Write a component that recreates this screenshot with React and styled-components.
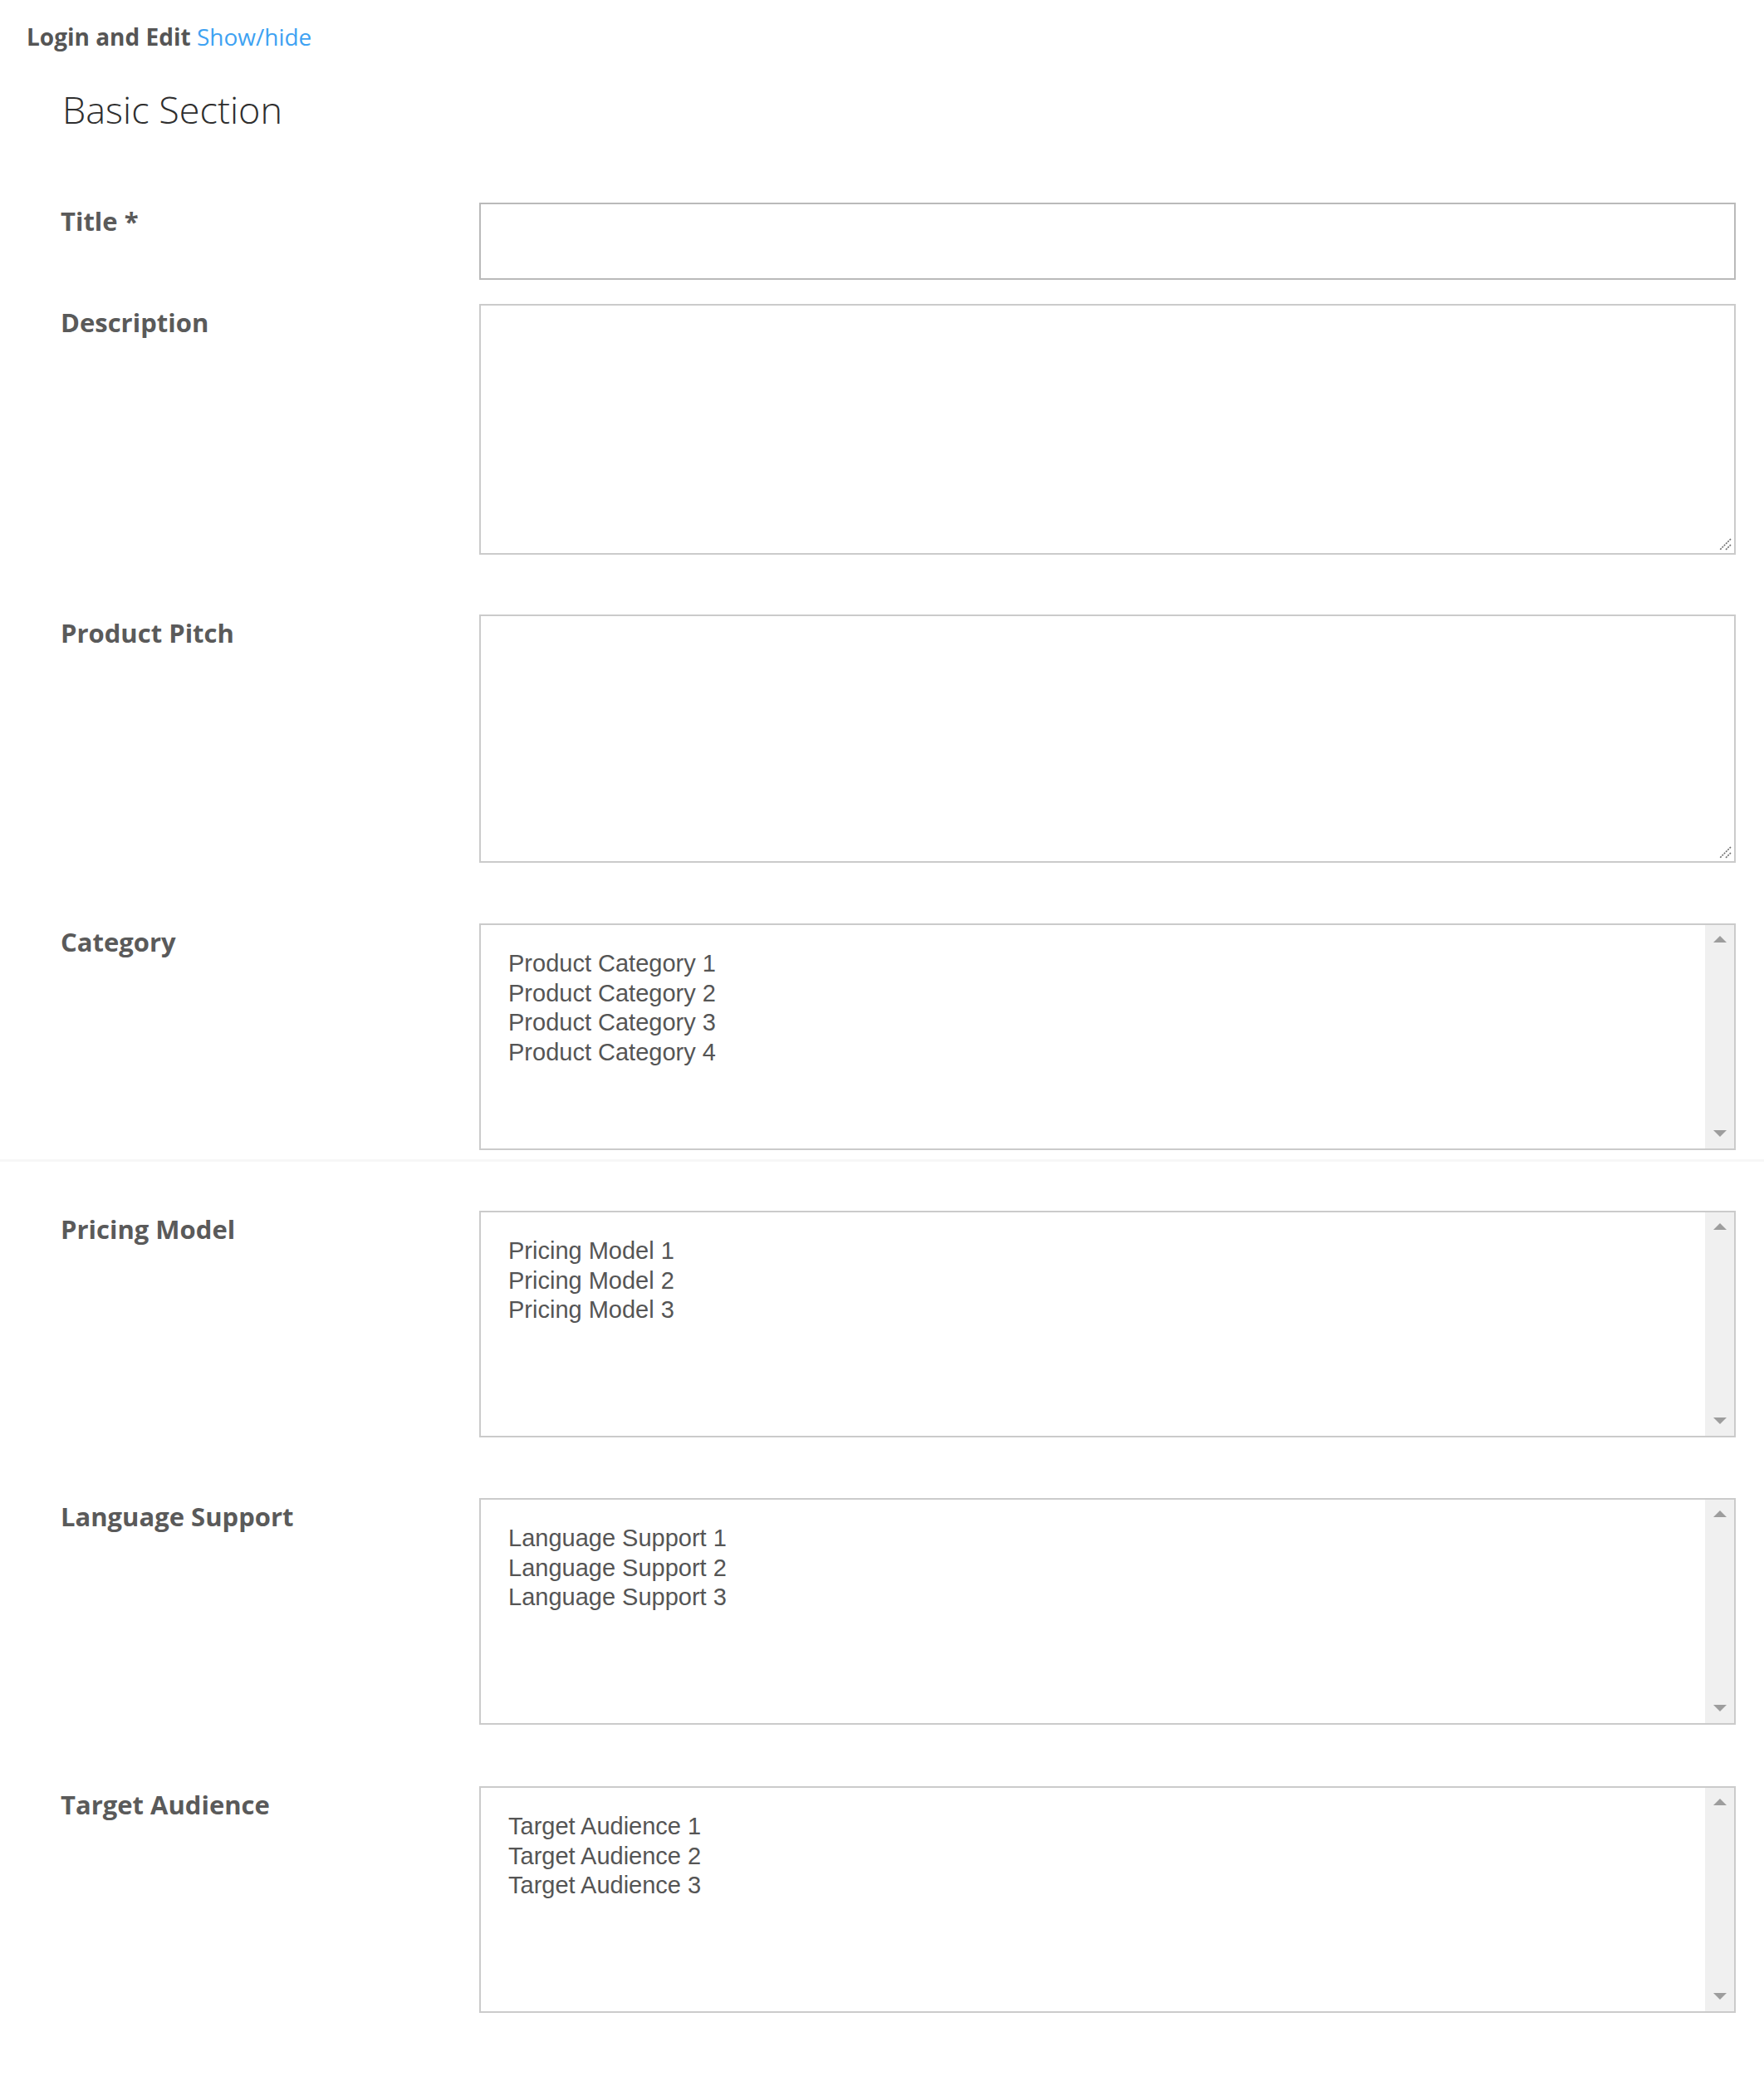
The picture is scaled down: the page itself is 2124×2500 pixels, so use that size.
import React from "react";
import styled, { createGlobalStyle } from "styled-components";

const GlobalStyle = createGlobalStyle`
  body {
    margin: 0;
    background: #fff;
    font-family: "Open Sans", "Noto Sans", sans-serif;
  }
`;

const Page = styled.div`
  padding: 25px 0 60px;
`;

const TopBar = styled.div`
  padding-left: 32px;
  font-size: 28px;
  line-height: 38px;
  color: #555;
`;

const TopTitle = styled.span`
  font-weight: 700;
`;

const ToggleLink = styled.a`
  color: #3ea2f2;
  text-decoration: none;
  cursor: pointer;
`;

const SectionTitle = styled.h2`
  margin: 42px 0 0;
  padding-left: 75px;
  font-size: 45px;
  line-height: 54px;
  font-weight: 300;
  color: #2e2e2e;
`;

const Form = styled.form`
  margin-top: 85px;
`;

// one label + field per row, the row may carry a divider
const Row = styled.div`
  display: grid;
  grid-template-columns: 504px 1fr;
  padding: 0 34px ${(p) => (p.divider ? "11px" : "0")} 73px;
  margin-bottom: ${(p) => p.space}px;
  border-bottom: ${(p) => (p.divider ? "3px solid #f7f7f7" : "none")};
`;

const Label = styled.label`
  font-size: 31px;
  line-height: 44px;
  font-weight: 700;
  color: #5a5a5a;
`;

const TextInput = styled.input`
  box-sizing: border-box;
  width: 100%;
  height: 93px;
  border: 2px solid #bababa;
  border-radius: 0;
  outline: none;
  padding: 0 16px;
  font: 30px "Liberation Sans", Arial, sans-serif;
`;

const AreaWrap = styled.div`
  position: relative;
`;

const TextArea = styled.textarea`
  box-sizing: border-box;
  display: block;
  width: 100%;
  height: ${(p) => p.h}px;
  border: 2px solid #cbcbcb;
  border-radius: 0;
  outline: none;
  padding: 12px 16px;
  resize: none;
  font: 30px "Liberation Sans", Arial, sans-serif;
`;

const Grip = styled.svg`
  position: absolute;
  right: 5px;
  bottom: 5px;
  width: 15px;
  height: 15px;
  pointer-events: none;
`;

const ListBox = styled.div`
  box-sizing: border-box;
  display: flex;
  height: 273px;
  border: 2px solid #cbcbcb;
  background: #fff;
`;

const Options = styled.ul`
  flex: 1;
  margin: 0;
  padding: 29px 0 0 33px;
  list-style: none;
  font-family: "Liberation Sans", Arial, sans-serif;
  font-size: 29px;
  line-height: 35.5px;
  color: #555;
`;

const Scrollbar = styled.div`
  width: 35px;
  background: #f0f0f0;
  display: flex;
  flex-direction: column;
  align-items: center;
  justify-content: space-between;
  padding: 13px 0 14px;
  box-sizing: border-box;
`;

const Arrow = styled.span`
  width: 0;
  height: 0;
  border-left: 8px solid transparent;
  border-right: 8px solid transparent;
  ${(p) =>
    p.down ? "border-top: 8px solid #9d9d9d;" : "border-bottom: 8px solid #9d9d9d;"}
`;

const ResizableArea = ({ h }) => (
  <AreaWrap>
    <TextArea h={h} />
    <Grip viewBox="0 0 15 15">
      <path d="M14 1 L1 14 M14 8 L8 14" stroke="#6b6b6b" strokeWidth="1.6" strokeDasharray="2 1.2" />
    </Grip>
  </AreaWrap>
);

const MultiSelect = ({ items }) => (
  <ListBox>
    <Options>
      {items.map((item) => (
        <li key={item}>{item}</li>
      ))}
    </Options>
    <Scrollbar>
      <Arrow />
      <Arrow down />
    </Scrollbar>
  </ListBox>
);

const lists = [
  { label: "Pricing Model", items: ["Pricing Model 1", "Pricing Model 2", "Pricing Model 3"], space: 73 },
  { label: "Language Support", items: ["Language Support 1", "Language Support 2", "Language Support 3"], space: 74 },
  { label: "Target Audience", items: ["Target Audience 1", "Target Audience 2", "Target Audience 3"], space: 0 },
];

export default function App() {
  return (
    <>
      <GlobalStyle />
      <Page>
        <TopBar>
          <TopTitle>Login and Edit</TopTitle> <ToggleLink>Show/hide</ToggleLink>
        </TopBar>
        <SectionTitle>Basic Section</SectionTitle>
        <Form>
          <Row space={29}>
            <Label>Title *</Label>
            <TextInput type="text" />
          </Row>
          <Row space={72}>
            <Label>Description</Label>
            <ResizableArea h={302} />
          </Row>
          <Row space={73}>
            <Label>Product Pitch</Label>
            <ResizableArea h={299} />
          </Row>
          <Row space={59} divider>
            <Label>Category</Label>
            <MultiSelect
              items={["Product Category 1", "Product Category 2", "Product Category 3", "Product Category 4"]}
            />
          </Row>
          {lists.map((l) => (
            <Row key={l.label} space={l.space}>
              <Label>{l.label}</Label>
              <MultiSelect items={l.items} />
            </Row>
          ))}
        </Form>
      </Page>
    </>
  );
}
